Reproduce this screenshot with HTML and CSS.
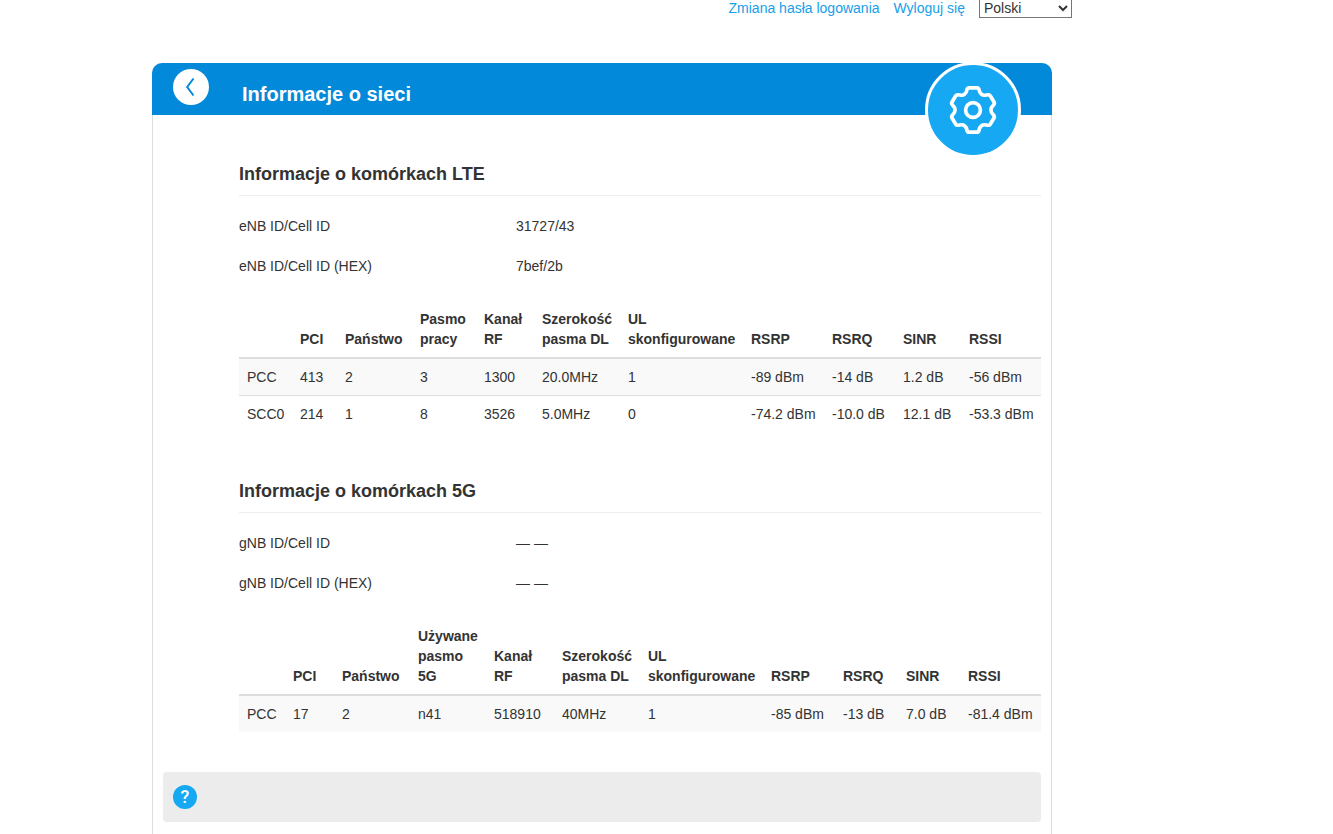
FILE: index.html
```html
<!DOCTYPE html>
<html lang="pl">
<head>
<meta charset="utf-8">
<title>Informacje o sieci</title>
<link rel="stylesheet" href="styles.css">
</head>
<body>
<div class="page">
  <nav class="topbar">
    <a href="#">Zmiana hasła logowania</a>
    <a href="#">Wyloguj się</a>
    <select class="language" aria-label="Język">
      <option>Polski</option>
      <option>English</option>
    </select>
  </nav>

  <main class="card">
    <header class="card-header">
      <button class="back" type="button" aria-label="Wstecz">
        <svg width="36" height="36" viewBox="0 0 36 36" fill="none" stroke="#0389d9" stroke-width="2"><path d="M20.500 9.500 14.200 18l6.300 8.500"/></svg>
      </button>
      <h1>Informacje o sieci</h1>
      <div class="badge">
        <svg width="48" height="50" viewBox="0 0 48 50" fill="none" stroke="#fff" stroke-width="3.700" stroke-linejoin="round"><path d="M20 2.800h8c1.300 0 1.800.8 2.100 2.200.7 3.800 3.200 6 7.200 5 2-.5 3.200-.6 4.100 1l3.600 6c.8 1.400.3 2.300-.8 3.300-3 2.600-3 6.800 0 9.400 1.100 1 1.600 1.900.8 3.300l-3.600 6c-.9 1.600-2.100 1.500-4.100 1-4-1-6.500 1.200-7.200 5-.3 1.400-.8 2.200-2.100 2.200h-8c-1.300 0-1.800-.8-2.100-2.200-.7-3.800-3.200-6-7.200-5-2 .5-3.200.6-4.100-1L3 33c-.8-1.400-.3-2.300.8-3.300 3-2.600 3-6.800 0-9.400-1.100-1-1.600-1.900-.8-3.300l3.600-6c.9-1.600 2.100-1.500 4.100-1 4 1 6.500-1.200 7.200-5 .3-1.400.8-2.200 2.100-2.200z"/><circle cx="24" cy="25" r="7.400"/></svg>
      </div>
    </header>

    <div class="content">
      <section>
        <h2>Informacje o komórkach LTE</h2>
        <dl class="facts">
          <dt>eNB ID/Cell ID</dt><dd>31727/43</dd>
          <dt>eNB ID/Cell ID (HEX)</dt><dd>7bef/2b</dd>
        </dl>
        <table class="cells">
          <colgroup><col class="w53"><col class="w45"><col class="w75"><col class="w64"><col class="w58"><col class="w86"><col class="w123"><col class="w81"><col class="w71"><col class="w66"><col class="w80"></colgroup>
          <thead>
            <tr><th></th><th>PCI</th><th>Państwo</th><th>Pasmo pracy</th><th>Kanał RF</th><th>Szerokość pasma DL</th><th>UL skonfigurowane</th><th>RSRP</th><th>RSRQ</th><th>SINR</th><th>RSSI</th></tr>
          </thead>
          <tbody>
            <tr><td>PCC</td><td>413</td><td>2</td><td>3</td><td>1300</td><td>20.0MHz</td><td>1</td><td>-89 dBm</td><td>-14 dB</td><td>1.2 dB</td><td>-56 dBm</td></tr>
            <tr><td>SCC0</td><td>214</td><td>1</td><td>8</td><td>3526</td><td>5.0MHz</td><td>0</td><td>-74.2 dBm</td><td>-10.0 dB</td><td>12.1 dB</td><td>-53.3 dBm</td></tr>
          </tbody>
        </table>
      </section>

      <section>
        <h2>Informacje o komórkach 5G</h2>
        <dl class="facts">
          <dt>gNB ID/Cell ID</dt><dd>— —</dd>
          <dt>gNB ID/Cell ID (HEX)</dt><dd>— —</dd>
        </dl>
        <table class="cells">
          <colgroup><col class="w46"><col class="w49"><col class="w76"><col class="w76"><col class="w68"><col class="w86"><col class="w123"><col class="w72"><col class="w63"><col class="w62"><col class="w81"></colgroup>
          <thead>
            <tr><th></th><th>PCI</th><th>Państwo</th><th>Używane pasmo 5G</th><th>Kanał RF</th><th>Szerokość pasma DL</th><th>UL skonfigurowane</th><th>RSRP</th><th>RSRQ</th><th>SINR</th><th>RSSI</th></tr>
          </thead>
          <tbody>
            <tr><td>PCC</td><td>17</td><td>2</td><td>n41</td><td>518910</td><td>40MHz</td><td>1</td><td>-85 dBm</td><td>-13 dB</td><td>7.0 dB</td><td>-81.4 dBm</td></tr>
          </tbody>
        </table>
      </section>
    </div>

    <footer class="help">
      <button class="help-button" type="button" aria-label="Pomoc">?</button>
    </footer>
  </main>
</div>
</body>
</html>
```
FILE: styles.css
```css
* { box-sizing: border-box; }

body {
  margin: 0;
  background: #fff;
  color: #333;
  font: 14px/20px "Liberation Sans", Arial, sans-serif;
}

.page {
  max-width: 1204px;
  padding: 0 132px 0 152px;
}

.topbar {
  display: flex;
  justify-content: flex-end;
  align-items: center;
  gap: 14px;
  margin-top: -2px;
}

.topbar a {
  color: #16a0ea;
  text-decoration: none;
}

.language {
  width: 93px;
  height: 20px;
  padding: 0;
  border: 1px solid #767676;
  border-radius: 0;
  background: #fff;
  color: #333;
  font: inherit;
}

.card {
  max-width: 900px;
  margin-top: 45px;
  padding-bottom: 20px;
  border: 1px solid #ddd;
  border-top: 0;
  border-radius: 10px 10px 0 0;
}

.card-header {
  position: relative;
  display: flex;
  gap: 33px;
  height: 52px;
  margin: 0 -1px;
  padding: 6px 21px;
  border-radius: 10px 10px 0 0;
  background: #0389d9;
  color: #fff;
}

.back {
  width: 36px;
  height: 36px;
  padding: 0;
  border: 0;
  border-radius: 50%;
  background: #fff;
}

.back svg { display: block; }

h1 {
  margin: 10px 0 0;
  font-size: 20px;
  line-height: 30px;
}

.badge {
  position: absolute;
  top: -1px;
  right: 31px;
  display: flex;
  align-items: center;
  justify-content: center;
  width: 96px;
  height: 96px;
  border: 3px solid #fff;
  border-radius: 50%;
  background: #16a8f2;
}

.content { padding: 44px 10px 0 86px; }

section { padding-bottom: 40px; }

section + section { padding-top: 4px; }

h2 {
  margin: 0 0 10px;
  padding: 5px 0 11px;
  border-bottom: 1px solid #eee;
  font-size: 18px;
  line-height: 20px;
}

.facts {
  display: grid;
  grid-template-columns: 277px 1fr;
  margin: 0 0 15px;
  line-height: 40px;
}

.facts dd { margin: 0; }

.cells {
  width: 100%;
  table-layout: fixed;
  border-collapse: collapse;
  text-align: left;
}

.cells th,
.cells td {
  padding: 8px;
  vertical-align: bottom;
}

.cells td {
  border-top: 1px solid #ddd;
  white-space: nowrap;
}

.cells th { border-bottom: 2px solid #ddd; }

.cells tbody tr:first-child td { border-top: 0; }

.cells tbody tr:nth-child(odd) { background: #f9f9f9; }

.w45 { width: 45px; }
.w46 { width: 46px; }
.w49 { width: 49px; }
.w53 { width: 53px; }
.w58 { width: 58px; }
.w62 { width: 62px; }
.w63 { width: 63px; }
.w64 { width: 64px; }
.w66 { width: 66px; }
.w68 { width: 68px; }
.w71 { width: 71px; }
.w72 { width: 72px; }
.w75 { width: 75px; }
.w76 { width: 76px; }
.w80 { width: 80px; }
.w81 { width: 81px; }
.w86 { width: 86px; }
.w123 { width: 123px; }

.help {
  display: flex;
  align-items: center;
  height: 50px;
  margin: 0 10px;
  padding: 0 10px;
  border-radius: 4px;
  background: #ececec;
}

.help-button {
  width: 24px;
  height: 24px;
  padding: 0;
  border: 0;
  border-radius: 50%;
  background: #16a8f2;
  color: #fff;
  font: 500 18px/24px Roboto, sans-serif;
}
```
